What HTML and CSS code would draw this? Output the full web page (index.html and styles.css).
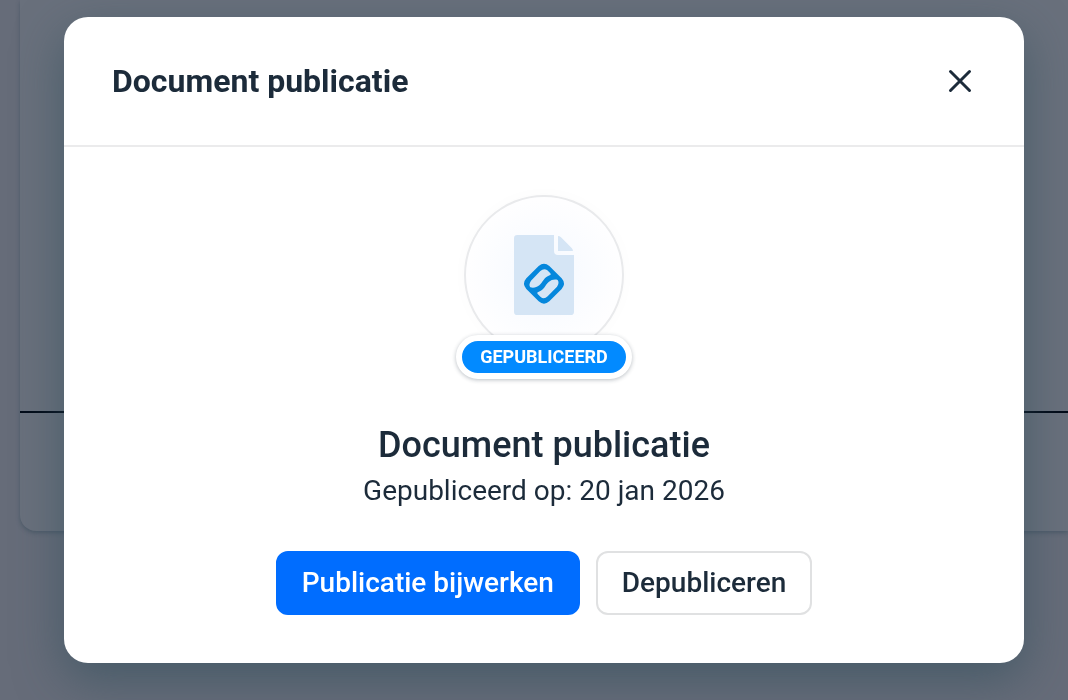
FILE: index.html
```
<!DOCTYPE html>
<html lang="nl">
<head>
  <meta charset="UTF-8">
  <meta name="viewport" content="width=device-width, initial-scale=1.0">
  <title>Document publicatie</title>
  <link rel="stylesheet" href="styles.css">
</head>
<body>
  <main class="page">
    <div class="panel">
      <div class="panel-content"></div>
      <div class="panel-footer"></div>
    </div>
  </main>

  <div class="overlay">
    <div class="modal" role="dialog" aria-modal="true" aria-labelledby="modal-title">
      <header class="modal-header">
        <h1 class="modal-title" id="modal-title">Document publicatie</h1>
        <button class="close-button" type="button" aria-label="Sluiten">
          <svg width="24" height="24" viewBox="0 0 24 24" aria-hidden="true">
            <path d="M2.5 2.5 21.5 21.5M21.5 2.5 2.5 21.5" fill="none" stroke="currentColor" stroke-width="3" stroke-linecap="round"/>
          </svg>
        </button>
      </header>

      <div class="modal-body">
        <div class="status">
          <div class="status-circle">
            <svg width="60" height="80" viewBox="0 0 180 240" aria-hidden="true">
              <path class="doc-page" d="M10 0H120V48Q120 60 132 60H180V230Q180 240 170 240H10Q0 240 0 230V10Q0 0 10 0Z"/>
              <path class="doc-page" d="M132 3Q137 3 141 7L173 39Q177 43 177 48H132Z"/>
              <path class="doc-logo" fill-rule="evenodd" d="M74 93Q90 79 106 93L143 130Q157 146 143 162L106 199Q90 213 74 199L37 162Q23 146 37 130ZM79 108Q90 98 100 106L109 115Q113 119 107 121C89 127 87 142 76 151C68 158 57 160 49 157Q43 149 51 137ZM101 184Q90 194 80 186L71 177Q67 173 73 171C91 165 93 150 104 141C112 134 123 132 131 135Q137 143 129 155Z"/>
            </svg>
          </div>
          <span class="badge">Gepubliceerd</span>
        </div>

        <h2 class="doc-title">Document publicatie</h2>
        <p class="doc-date">Gepubliceerd op: 20 jan 2026</p>

        <div class="actions">
          <button class="button button-primary" type="button">Publicatie bijwerken</button>
          <button class="button button-secondary" type="button">Depubliceren</button>
        </div>
      </div>
    </div>
  </div>
</body>
</html>
```
FILE: styles.css
```
* {
  box-sizing: border-box;
}

body {
  margin: 0;
  min-height: 100vh;
  overflow: hidden;
  font-family: Roboto, sans-serif;
  color: #1c2b3a;
  background-color: #666c79;
}

h1,
h2,
p {
  margin: 0;
}

.page {
  padding-left: 20px;
}

.panel {
  background-color: #69707c;
  border-bottom-left-radius: 16px;
  box-shadow: 0 2px 4px rgba(40, 65, 80, 0.4);
}

.panel-content {
  height: 413px;
  border-bottom: 2px solid #020b18;
}

.panel-footer {
  height: 118px;
}

.overlay {
  position: fixed;
  inset: 0;
  display: flex;
  align-items: flex-start;
  padding: 17px 44px 37px 64px;
}

.modal {
  flex: 1;
  background-color: #fff;
  border-radius: 24px;
  box-shadow: 0 16px 48px rgba(48, 78, 92, 0.6);
}

.modal-header {
  display: flex;
  align-items: center;
  justify-content: space-between;
  padding: 40px 48px;
  border-bottom: 2px solid #ebebec;
}

.modal-title {
  font-size: 32px;
  line-height: 48px;
  font-weight: 700;
}

.close-button {
  display: flex;
  padding: 4px;
  border: none;
  background: none;
  color: inherit;
  cursor: pointer;
}

.modal-body {
  display: flex;
  flex-direction: column;
  align-items: center;
  padding: 48px;
  text-align: center;
}

.status {
  display: flex;
  flex-direction: column;
  align-items: center;
}

.status-circle {
  display: flex;
  align-items: center;
  justify-content: center;
  width: 160px;
  height: 160px;
  border: 2px solid #e9eaec;
  border-radius: 50%;
  background: radial-gradient(circle, #f5f9ff, #fefeff 68%);
  box-shadow: 0 0 16px rgba(28, 43, 58, 0.02);
}

.doc-page {
  fill: #d5e5f5;
}

.doc-logo {
  fill: #0587dc;
}

.badge {
  margin-top: -20px;
  padding: 0 18px;
  border: 6px solid #fff;
  border-radius: 22px;
  background-color: #028aff;
  box-shadow: 0 1px 4px rgba(28, 43, 58, 0.3);
  color: #fff;
  font-size: 18px;
  line-height: 32px;
  font-weight: 700;
  text-transform: uppercase;
}

.doc-title {
  margin-top: 40px;
  font-size: 36px;
  line-height: 52px;
  font-weight: 500;
}

.doc-date {
  font-size: 28px;
  line-height: 40px;
}

.actions {
  display: flex;
  flex-wrap: wrap;
  justify-content: center;
  gap: 16px;
  margin-top: 40px;
}

.button {
  height: 64px;
  padding: 0 24px 2px;
  border: 2px solid transparent;
  border-radius: 12px;
  font: inherit;
  font-size: 28px;
  font-weight: 500;
  cursor: pointer;
}

.button-primary {
  border-color: #006dff;
  background-color: #006dff;
  color: #fff;
}

.button-secondary {
  border-color: #e0e1e2;
  background-color: #fff;
  color: inherit;
}
```
